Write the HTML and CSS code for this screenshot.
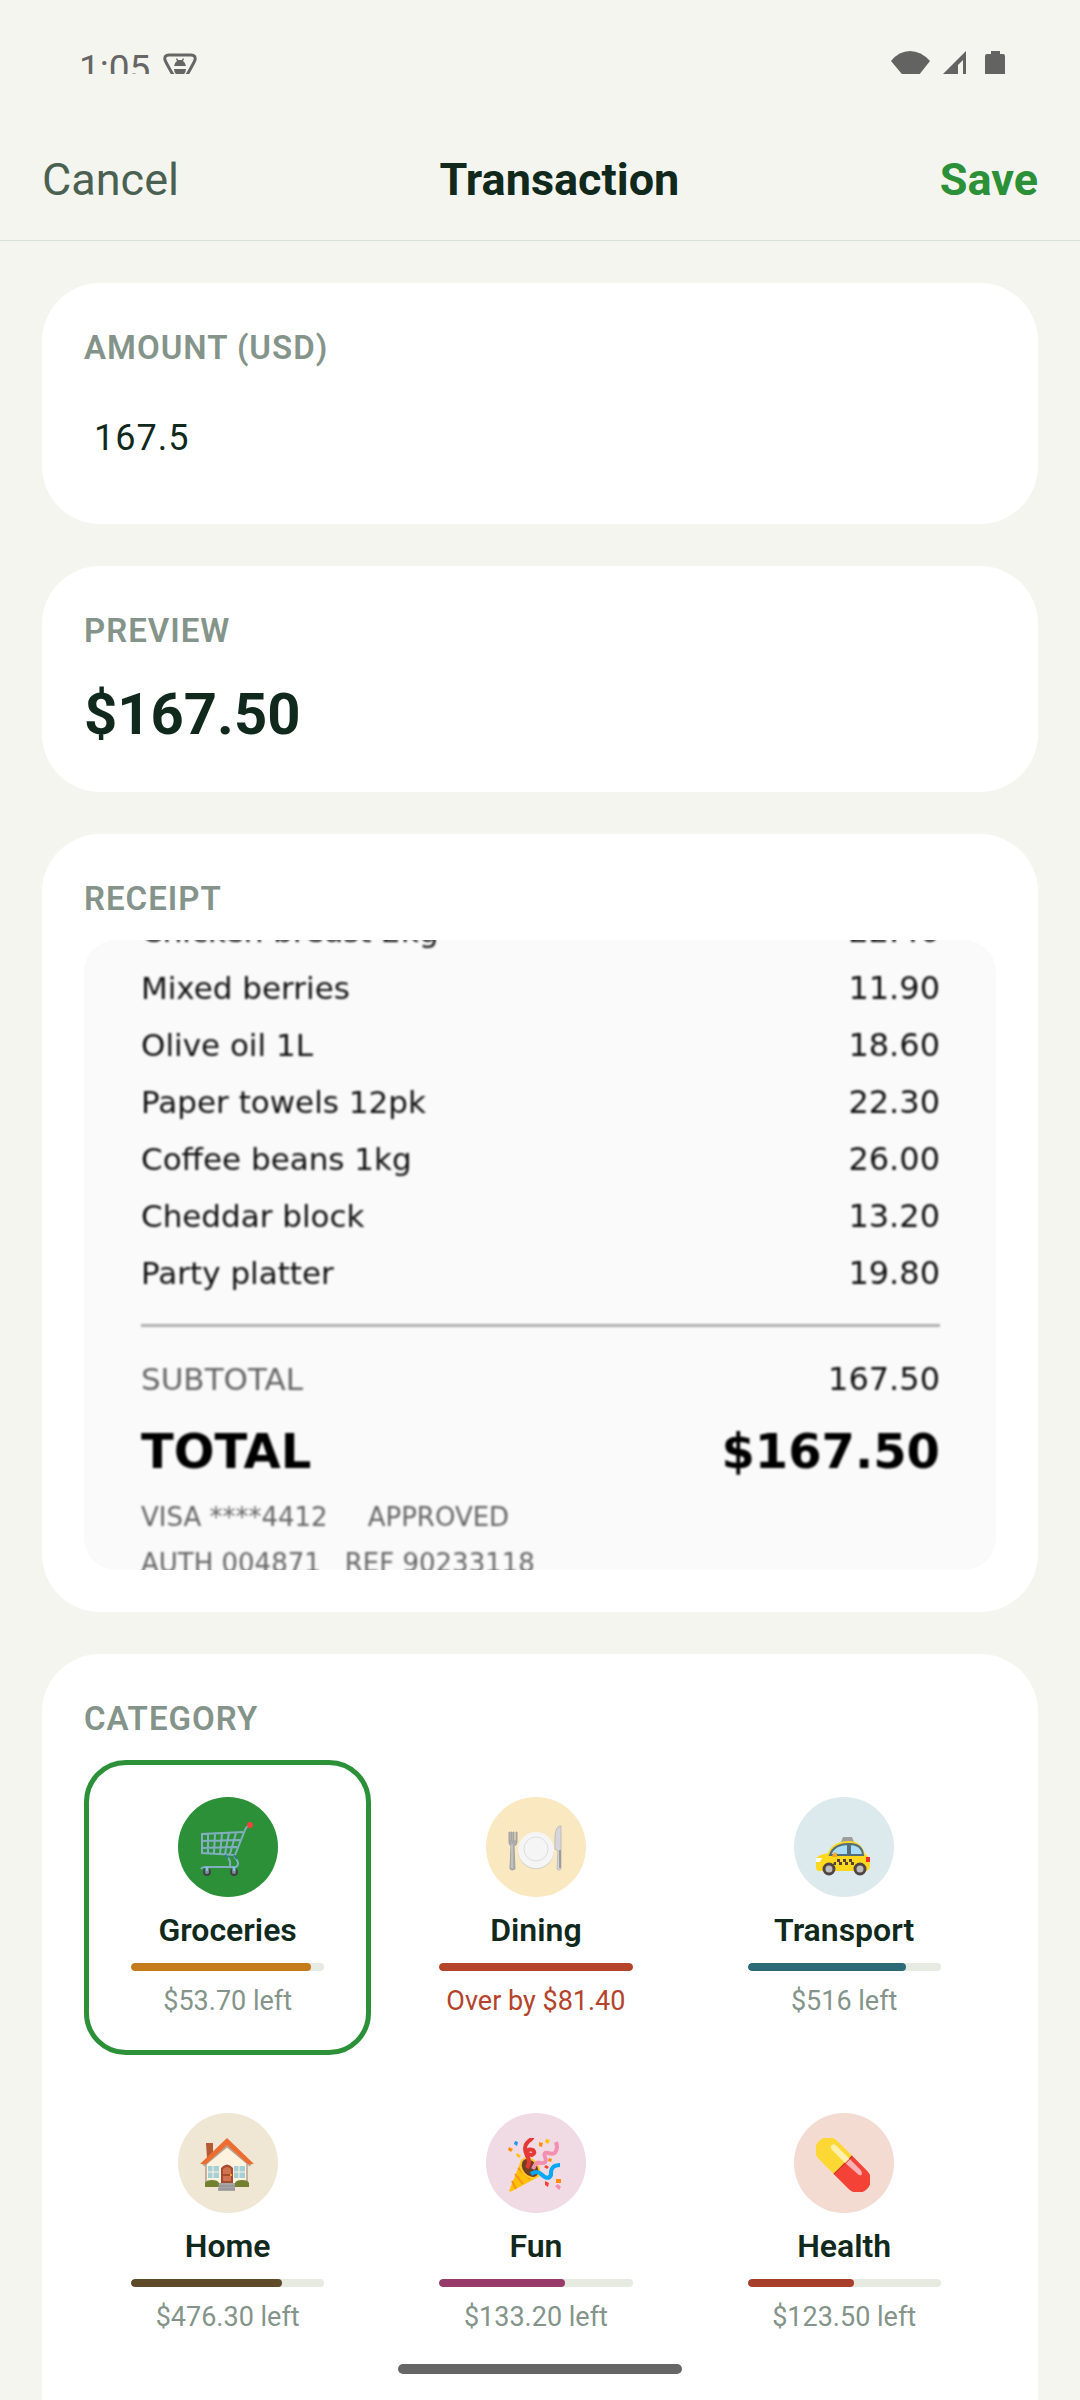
FILE: index.html
```html
<!DOCTYPE html>
<html lang="en">
<head>
    <meta charset="UTF-8">
    <meta name="viewport" content="width=device-width, initial-scale=1.0">
    <title>Transaction</title>
    <link rel="stylesheet" href="styles.css">
</head>
<body>

<div class="screen">
    <div class="status-bar">
        <span class="clock">1:05</span>
        <svg class="debug-icon" width="36" height="34" viewBox="0 0 36 34">
            <path d="M7 4h22q5 0 4 5q-1 3-11 20q-4 5-8 0Q4 12 3 9q-1-5 4-5z" fill="none" stroke="#666" stroke-width="3"/>
            <path d="M12 15q1-4 3-5l-1-2 1-1 1 2h4l1-2 1 1-1 2q2 1 3 5zM12 18h12q0 5-6 8-6-3-6-8z" fill="#666"/>
        </svg>
        <div class="status-icons">
            <svg width="39" height="34" viewBox="0 0 39 34" fill="#636361">
                <path d="M0 10Q8 0 19 0T39 10L20 34z"/>
            </svg>
            <svg width="24" height="34" viewBox="0 0 24 34" fill="#636361">
                <path d="M23 0v34h-3V9l-5 5v20H0V23z"/>
            </svg>
            <svg width="20" height="34" viewBox="0 0 20 34" fill="#636361">
                <path d="M6 0h9v3h3q2 0 2 2v29H0V5q0-2 2-2h4z"/>
            </svg>
        </div>
    </div>

    <header class="top-bar">
        <button type="button" class="cancel">Cancel</button>
        <h1>Transaction</h1>
        <button type="button" class="save">Save</button>
    </header>

    <main class="content">
        <section class="card">
            <label class="card-label" for="amount">AMOUNT (USD)</label>
            <input class="amount-input" type="text" inputmode="decimal" id="amount" value="167.5">
        </section>

        <section class="card">
            <h2 class="card-label">PREVIEW</h2>
            <p class="preview-amount">$167.50</p>
        </section>

        <section class="card">
            <h2 class="card-label">RECEIPT</h2>
            <div class="receipt">
                <div class="receipt-paper">
                    <table class="receipt-items">
                        <tr><td>Chicken breast 2kg</td><td>22.40</td></tr>
                        <tr><td>Mixed berries</td><td>11.90</td></tr>
                        <tr><td>Olive oil 1L</td><td>18.60</td></tr>
                        <tr><td>Paper towels 12pk</td><td>22.30</td></tr>
                        <tr><td>Coffee beans 1kg</td><td>26.00</td></tr>
                        <tr><td>Cheddar block</td><td>13.20</td></tr>
                        <tr><td>Party platter</td><td>19.80</td></tr>
                    </table>
                    <hr>
                    <table class="receipt-items">
                        <tr class="subtotal"><td>SUBTOTAL</td><td>167.50</td></tr>
                        <tr class="total"><td>TOTAL</td><td>$167.50</td></tr>
                    </table>
                    <p class="receipt-note"><span>VISA ****4412</span><span class="approved">APPROVED</span></p>
                    <p class="receipt-note"><span>AUTH 004871</span><span class="ref">REF 90233118</span></p>
                </div>
            </div>
        </section>

        <section class="card">
            <h2 class="card-label">CATEGORY</h2>
            <div class="categories">
                <button type="button" class="category selected" aria-pressed="true">
                    <span class="icon groceries">
                        <svg width="54" height="54" viewBox="0 0 54 54" fill="none">
                            <path d="M51 3q-4 0-6 5L35 33 2 31V12l41-2M8 12v19M15 12l-1 19M22 12l-2 20M29 11l-4 21M36 11l-6 21M2 19l38-1M2 26l35-1" stroke="#82aec0" stroke-width="2"/>
                            <path d="M26 34q5 3 4 10M34 34q7 8 2 11H5q-3 0-4 2" stroke="#82aec0" stroke-width="2"/>
                            <path d="M25 33l3 3M34 33l3 4" stroke="#2f7889" stroke-width="2"/>
                            <circle cx="7" cy="50" r="3" fill="#78909c" stroke="#424242" stroke-width="2"/>
                            <circle cx="34" cy="50" r="3" fill="#78909c" stroke="#424242" stroke-width="2"/>
                            <path d="M7 45v4M34 45v4" stroke="#82c4d8" stroke-width="3"/>
                            <circle cx="50" cy="3" r="3" fill="#f44336"/>
                        </svg>
                    </span>
                    <span class="name">Groceries</span>
                    <span class="track"><span class="fill amber" style="width: 93%"></span></span>
                    <span class="left">$53.70 left</span>
                </button>
                <button type="button" class="category" aria-pressed="false">
                    <span class="icon dining">
                        <svg width="54" height="54" viewBox="0 0 54 54">
                            <path d="M1 10v10q0 3 2 4l-1 23q2 2 5 0L6 24q3-1 3-4V10H8v9H6v-9H5v9H4v-9H3v9H2v-9z" fill="#adadad" stroke="#a2a2a2" stroke-width="1"/>
                            <path d="M4 22v24" stroke="#d4d4d4" stroke-width="1"/>
                            <circle cx="28" cy="29" r="18" fill="#cfcfcf"/>
                            <circle cx="28" cy="28" r="18" fill="#f5f5f5"/>
                            <circle cx="28" cy="27" r="12" fill="#f5f5f5" stroke="#dedede"/>
                            <path d="M52 4q-4 1-5 9v14l3 2-1 18q2 2 4 0V4z" fill="#d6d6da" stroke="#bcbcc0" stroke-width="1"/>
                            <path d="M52 28v18" stroke="#9c9c9c" stroke-width="2"/>
                        </svg>
                    </span>
                    <span class="name">Dining</span>
                    <span class="track"><span class="fill red" style="width: 100%"></span></span>
                    <span class="left over">Over by $81.40</span>
                </button>
                <button type="button" class="category" aria-pressed="false">
                    <span class="icon transport">
                        <svg width="54" height="54" viewBox="0 -4 54 54">
                            <path d="M25 16l2-5h9l2 5z" fill="#9e9e9e"/>
                            <path d="M0 33q1-4 12-6 5-12 21-12 12 0 16 13 5 2 5 11 0 6-5 6H3q-3 0-3-4z" fill="#fdd81f"/>
                            <path d="M14 29q4-11 18-11v11zM34 18q12 0 13 11H34z" fill="#a9dcf6" stroke="#546e7a" stroke-width="2"/>
                            <path d="M16 31q1-6 5-4v4z" fill="#f9a825"/>
                            <path d="M0 32h6l-2 4H0z" fill="#fff"/>
                            <path d="M50 31h4v5h-4z" fill="#f22b2b"/>
                            <path d="M18 36h3v-3h3v3h3v-3h3v3h3v-3h3v3h2v3h-3v-3h-3v3h-3v-3h-3v3h-3v-3h-3v3h-3z" fill="#544238"/>
                            <circle cx="13" cy="43" r="5" fill="#bdbdbd" stroke="#504541" stroke-width="3"/>
                            <circle cx="44" cy="43" r="5" fill="#bdbdbd" stroke="#504541" stroke-width="3"/>
                        </svg>
                    </span>
                    <span class="name">Transport</span>
                    <span class="track"><span class="fill teal" style="width: 82%"></span></span>
                    <span class="left">$516 left</span>
                </button>
                <button type="button" class="category" aria-pressed="false">
                    <span class="icon home">
                        <svg width="54" height="54" viewBox="0 0 54 54">
                            <path d="M6 5h7v9l-6 6z" fill="#b55a34"/>
                            <path d="M6 25L27 6l21 19v23H6z" fill="#fff3e0"/>
                            <path d="M6 26v20M47 26v20" stroke="#8d7566" stroke-width="1"/>
                            <path d="M3 27L27 7l24 20" fill="none" stroke="#b8a48e" stroke-width="4"/>
                            <path d="M0 26L27 0l27 26h-6L27 7 6 26z" fill="#ed6c30"/>
                            <path d="M8 28h11v12H8zM34 28h11v12H34z" fill="#a6cfd6"/>
                            <path d="M13 28v12M8 34h11M39 28v12M34 34h11" stroke="#fff3e0" stroke-width="1"/>
                            <path d="M21 45V30q6-7 12 0v15z" fill="#a64a30"/>
                            <path d="M23 36v-5q4-4 8 0v5zM23 38h8v5h-8z" fill="#d07450"/>
                            <circle cx="31" cy="37" r="1" fill="#ffca28"/>
                            <path d="M5 49v-4q1-3 7-3t7 3v4zM35 49v-4q1-3 7-3t7 3v4z" fill="#728030"/>
                            <path d="M19 45h16v8H18z" fill="#a6a6a6"/>
                            <path d="M19 48h16M18 51h17" stroke="#8c8c8c"/>
                        </svg>
                    </span>
                    <span class="name">Home</span>
                    <span class="track"><span class="fill brown" style="width: 78%"></span></span>
                    <span class="left">$476.30 left</span>
                </button>
                <button type="button" class="category" aria-pressed="false">
                    <span class="icon fun">
                        <svg width="54" height="54" viewBox="0 0 54 54" fill="none">
                            <path d="M1 53L13 23q4 16 19 15L4 53q-2 1-3 0z" fill="#ffc107"/>
                            <path d="M4 43l4 8M7 36l8 10M10 30l12 11" stroke="#ff9318" stroke-width="2"/>
                            <ellipse cx="22" cy="30" rx="8" ry="11" transform="rotate(-40 22 30)" fill="#704023" stroke="#ffca28" stroke-width="2"/>
                            <path d="M19 30q4-7 0-12-4-9 0-13 4-5 6-3M17 15q3-5 8-3 3 3-1 5-5 0-7-5" stroke="#e53935" stroke-width="4"/>
                            <path d="M25 31q3-8 7-6 8 1 5-6-2-5 3-4 7 2 8-2 2-4 0-9" stroke="#f48fb1" stroke-width="4"/>
                            <path d="M23 36q6-4 10 0 7 7 10 1-1-10 9-10" stroke="#03a9f4" stroke-width="4"/>
                            <path d="M7 3l3 1-1 4-3-2z" fill="#2196f3"/>
                            <path d="M1 9l4 2-2 3-3-2zM31 4l4 1-1 4-3-1zM41 20l3 1-1 3-3-1zM48 41h5v4h-5z" fill="#ff8f00"/>
                            <path d="M9 15l4 3-2 2-3-3zM38 1l4 1-2 4-3-2z" fill="#ffc107"/>
                            <path d="M38 27l3 2-2 2-3-2zM37 43l4 2-1 4-3-2z" fill="#f44336"/>
                            <path d="M47 48l3-2 3 3-2 3z" fill="#f48fb1"/>
                        </svg>
                    </span>
                    <span class="name">Fun</span>
                    <span class="track"><span class="fill plum" style="width: 65%"></span></span>
                    <span class="left">$133.20 left</span>
                </button>
                <button type="button" class="category" aria-pressed="false">
                    <span class="icon health">
                        <svg width="54" height="54" viewBox="0 0 54 54">
                            <g transform="rotate(45 27 27)">
                                <path d="M27 14h21a13 13 0 0 1 0 26H27z" fill="#f44336"/>
                                <path d="M27 14H6a13 13 0 0 0 0 26h21z" fill="#fdd835"/>
                                <path d="M27 14v26" stroke="#c62828" stroke-width="1"/>
                                <path d="M27 18H9q-4 0-4 3t4 3h18z" fill="#fff0b0"/>
                                <path d="M28 18h15q4 1 4 3t-4 2l-15 1z" fill="#f9b0b5"/>
                            </g>
                        </svg>
                    </span>
                    <span class="name">Health</span>
                    <span class="track"><span class="fill rust" style="width: 55%"></span></span>
                    <span class="left">$123.50 left</span>
                </button>
            </div>
        </section>
    </main>

    <div class="home-indicator"></div>
</div>

</body>
</html>
```
FILE: styles.css
```css
* {
    box-sizing: border-box;
}
body {
    margin: 0;
    font-family: Roboto, sans-serif;
    background-color: #f5f5ef;
    color: #10291c;
}
h1, h2, p {
    margin: 0;
}
button {
    padding: 0;
    border: none;
    background: none;
    font-family: inherit;
    color: inherit;
}
.screen {
    display: flex;
    flex-direction: column;
    height: 100vh;
    overflow: hidden;
}

/* status bar */
.status-bar {
    display: flex;
    flex-shrink: 0;
    align-items: flex-start;
    height: 74px;
    padding: 51px 75px 0 79px;
    margin-bottom: 46px;
    overflow: hidden;
}
.clock {
    font-size: 37px;
    line-height: 36px;
    color: #666;
}
.debug-icon {
    margin-left: 12px;
}
.status-icons {
    display: flex;
    gap: 13px;
    margin-left: auto;
}
.status-icons svg:last-child {
    margin-left: 5px;
}

/* top bar */
.top-bar {
    display: flex;
    flex-shrink: 0;
    align-items: center;
    justify-content: space-between;
    height: 121px;
    padding: 0 42px;
    border-bottom: 1px solid #d9e2da;
}
.top-bar h1,
.top-bar button {
    font-size: 45px;
    line-height: 60px;
}
.top-bar h1 {
    font-weight: 700;
}
.cancel {
    color: #4a6152;
}
.top-bar .save {
    font-weight: 700;
    color: #2b9038;
}

/* cards */
.content {
    display: flex;
    flex-direction: column;
    gap: 42px;
    padding: 42px;
}
.card {
    flex-shrink: 0;
    padding: 42px;
    border-radius: 58px;
    background-color: #fff;
}
.card-label {
    display: block;
    margin-bottom: 18px;
    font-size: 33px;
    font-weight: 600;
    line-height: 46px;
    letter-spacing: 1px;
    color: #84948a;
}
.amount-input {
    display: block;
    width: 100%;
    height: 93px;
    padding: 4px 10px 0;
    border: none;
    outline: none;
    font-family: inherit;
    font-size: 36px;
    letter-spacing: 1px;
    color: inherit;
    background: none;
}
.preview-amount {
    padding-top: 6px;
    font-size: 58px;
    font-weight: 700;
    line-height: 72px;
}

/* receipt */
.receipt {
    display: grid;
    align-content: center;
    height: 630px;
    border-radius: 32px;
    overflow: hidden;
    background-color: #fafafa;
}
.receipt-paper {
    padding: 0 56px 22px 57px;
    font-family: "DejaVu Sans", sans-serif;
    font-size: 31px;
    color: #111;
    filter: blur(1px);
}
.receipt-items {
    width: 100%;
    border-collapse: collapse;
}
.receipt-items td {
    height: 57px;
    padding: 0;
}
.receipt-items td:last-child {
    font-size: 32px;
    text-align: right;
}
.receipt hr {
    height: 3px;
    margin: 23px 0;
    border: none;
    background-color: #b0b0b0;
}
.subtotal td:first-child {
    color: #666;
}
.receipt-items .total td {
    height: 87px;
    font-size: 48px;
    font-weight: 700;
    color: #000;
}
.receipt-note {
    font-size: 26px;
    line-height: 46px;
    color: #666;
}
.approved {
    margin-left: 40px;
}
.ref {
    margin-left: 24px;
}

/* categories */
.categories {
    display: grid;
    grid-template-columns: repeat(3, 31.5%);
    gap: 21px;
    padding-bottom: 60px;
}
.category {
    display: flex;
    flex-direction: column;
    align-items: center;
    padding: 32px 42px;
    border: 5px solid transparent;
    border-radius: 42px;
}
.category.selected {
    border-color: #2b9038;
}
.icon {
    display: flex;
    align-items: center;
    justify-content: center;
    width: 100px;
    height: 100px;
    padding: 4px 2px 0 0;
    border-radius: 50%;
}
.groceries { background-color: #2b9038; }
.dining { background-color: #fae9c0; }
.transport { background-color: #ddeaed; }
.home { background-color: #efe6d3; }
.fun { background-color: #f0dbe4; }
.health { background-color: #f4dbd2; }
.name {
    margin: 13px 0;
    font-size: 32px;
    font-weight: 600;
    line-height: 40px;
}
.track {
    width: 100%;
    height: 8px;
    margin-bottom: 13px;
    border-radius: 4px;
    overflow: hidden;
    background-color: #e7eae0;
}
.fill {
    display: block;
    height: 100%;
    border-radius: 4px;
}
.amber { background-color: #c47b1b; }
.red { background-color: #b5432c; }
.teal { background-color: #2d6a78; }
.brown { background-color: #5f4a2a; }
.plum { background-color: #983b6b; }
.rust { background-color: #a83f2a; }
.left {
    font-size: 27px;
    line-height: 34px;
    white-space: nowrap;
    color: #84948a;
}
.over {
    color: #b5432c;
}

.home-indicator {
    position: fixed;
    bottom: 26px;
    left: 50%;
    width: 284px;
    height: 10px;
    margin-left: -142px;
    border-radius: 5px;
    background-color: #666;
}
```
